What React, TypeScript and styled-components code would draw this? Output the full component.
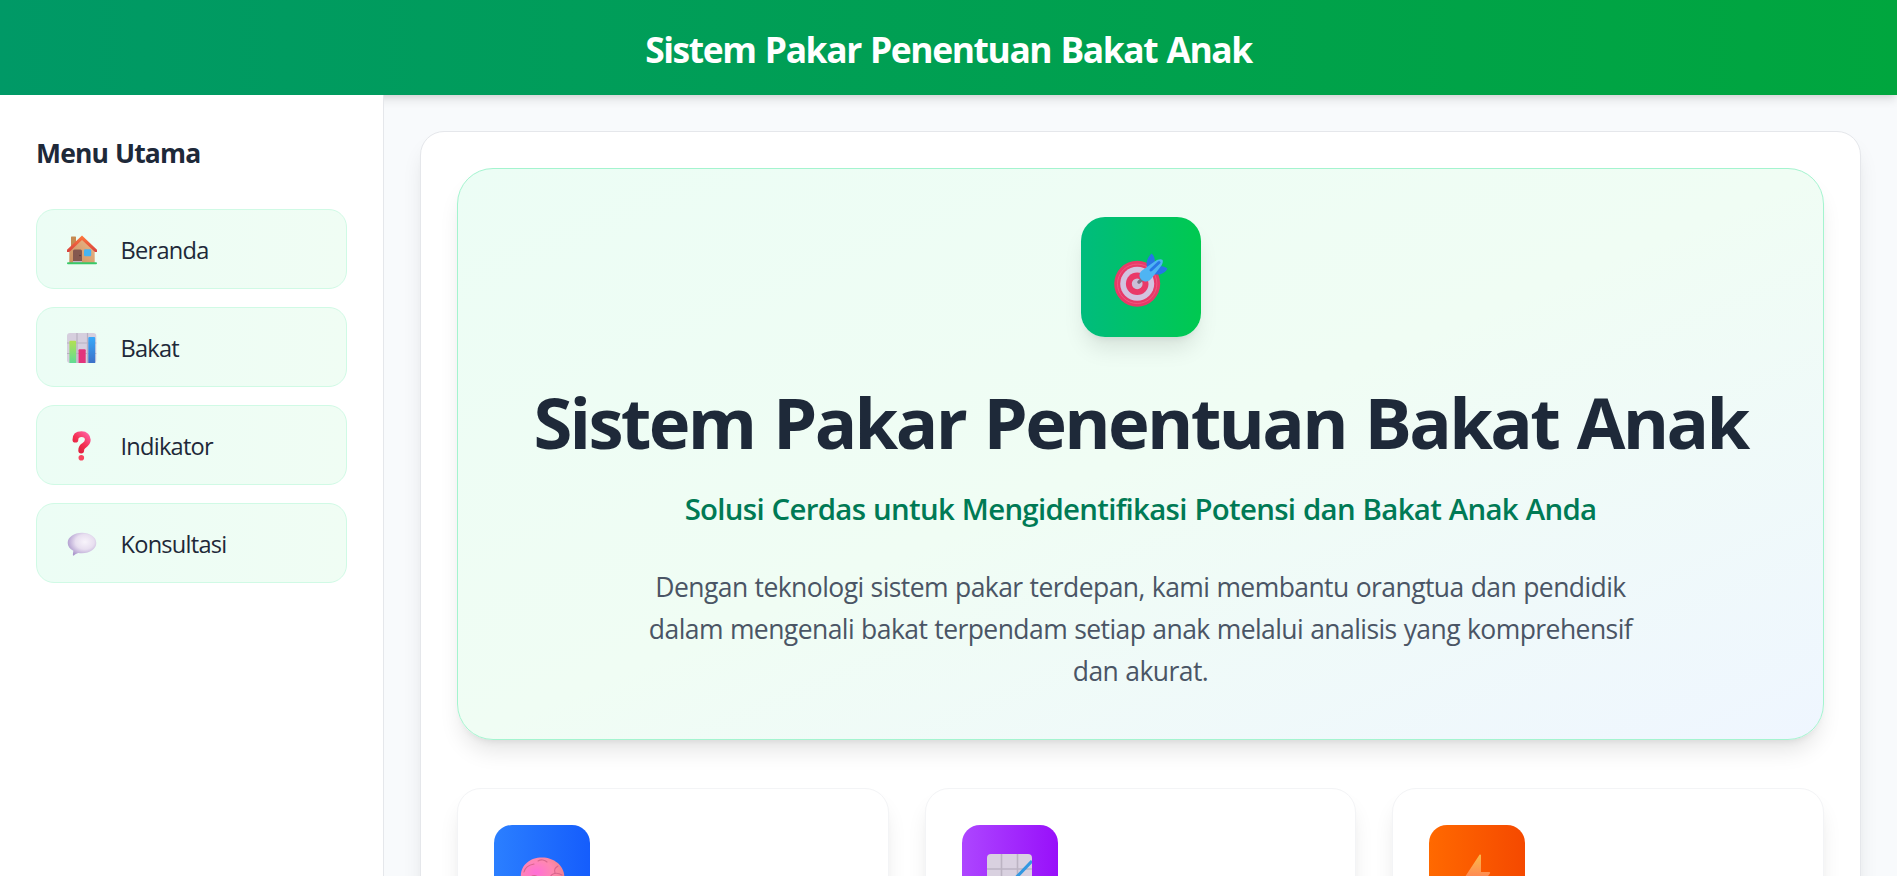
import React from 'react';
import styled, { createGlobalStyle } from 'styled-components';

const GlobalStyle = createGlobalStyle`
  *, *::before, *::after { box-sizing: border-box; }
  html, body { margin: 0; padding: 0; background: #fff; overflow: hidden; }
  body { font-family: 'Open Sans', 'Noto Sans', sans-serif; color: #1e2939; }
  h1, h2, p { margin: 0; }
`;

const Page = styled.div`
  width: 1897px;
  height: 876px;
  display: flex;
  flex-direction: column;
  overflow: hidden;
  background: #f8fafc;
`;

const Header = styled.header`
  flex: none;
  height: 95px;
  display: flex;
  align-items: center;
  justify-content: center;
  padding-top: 2px;
  background: linear-gradient(to right, #009966, #00a63e);
  box-shadow: 0 6px 9px -1px rgba(0, 0, 0, 0.1), 0 3px 6px -3px rgba(0, 0, 0, 0.1);
`;

const HeaderTitle = styled.h1`
  font-size: 35.4px;
  line-height: 48px;
  font-weight: 700;
  letter-spacing: -1.4px;
  word-spacing: 1.4px;
  color: #fff;
  white-space: nowrap;
`;

const Body = styled.div`
  flex: 1;
  min-height: 0;
  display: flex;
`;

const Sidebar = styled.aside`
  flex: none;
  position: relative;
  width: 384px;
  padding: 37px 36px 36px;
  background: #fff;
  border-right: 1px solid #e5e7eb;
`;

const SidebarTitle = styled.h2`
  font-size: 26.5px;
  line-height: 42px;
  font-weight: 700;
  letter-spacing: -0.85px;
  word-spacing: 0.9px;
  color: #1e2939;
  margin-bottom: 35px;
`;

const Menu = styled.nav`
  display: flex;
  flex-direction: column;
  gap: 18px;
`;

const MenuItem = styled.a`
  height: 80px;
  display: flex;
  align-items: center;
  gap: 23.5px;
  padding: 2px 24px 0 30px;
  border: 1px solid #d0fae5;
  border-radius: 18px;
  background: linear-gradient(to right, #ecfdf5, #f0fdf4);
  font-size: 23.6px;
  line-height: 36px;
  letter-spacing: -0.75px;

  svg { flex: none; width: 30px; height: 30px; }
`;

const Main = styled.main`
  flex: 1;
  min-width: 0;
  padding: 36px;
`;

const Panel = styled.section`
  height: 1200px;
  padding: 36px;
  border: 1px solid #e5e7eb;
  border-radius: 24px;
  background: #fff;
  box-shadow: 0 15px 22px -4px rgba(0, 0, 0, 0.1), 0 6px 9px -6px rgba(0, 0, 0, 0.1);
`;

const Hero = styled.div`
  height: 572px;
  display: flex;
  flex-direction: column;
  align-items: center;
  padding: 48px;
  border: 1px solid #a4f4cf;
  border-radius: 36px;
  background: linear-gradient(to bottom right, #ecfdf5, #f0fdf4 50%, #eff6ff);
  box-shadow: 0 15px 22px -4px rgba(0, 0, 0, 0.1), 0 6px 9px -6px rgba(0, 0, 0, 0.1);
  text-align: center;
`;

const HeroIcon = styled.div`
  flex: none;
  width: 120px;
  height: 120px;
  display: grid;
  place-items: center;
  border-radius: 24px;
  background: linear-gradient(to right, #00bc7d, #00c950);
  box-shadow: 0 15px 22px -4px rgba(0, 0, 0, 0.1), 0 6px 9px -6px rgba(0, 0, 0, 0.1);

  svg { width: 54px; height: 54px; margin-top: 6px; }
`;

const HeroTitle = styled.h1`
  margin-top: 40px;
  font-size: 70.6px;
  line-height: 90px;
  font-weight: 700;
  letter-spacing: -2.7px;
  word-spacing: 3px;
  white-space: nowrap;
`;

const HeroSubtitle = styled.p`
  margin-top: 21px;
  font-size: 29.4px;
  line-height: 42px;
  font-weight: 600;
  letter-spacing: -0.7px;
  word-spacing: 0.8px;
  color: #007a55;
  white-space: nowrap;
`;

const HeroText = styled.p`
  margin-top: 36px;
  font-size: 26.5px;
  line-height: 42px;
  letter-spacing: -0.57px;
  word-spacing: 0.7px;
  color: #4a5565;
  white-space: nowrap;
`;

const CardGrid = styled.div`
  display: grid;
  grid-template-columns: repeat(3, 1fr);
  gap: 36px;
  margin-top: 48px;
`;

const Card = styled.article`
  height: 360px;
  padding: 36px;
  border: 1px solid #f3f4f6;
  border-radius: 24px;
  background: #fff;
  box-shadow: 0 15px 22px -4px rgba(0, 0, 0, 0.1), 0 6px 9px -6px rgba(0, 0, 0, 0.1);
`;

const CardIcon = styled.div<{ $from: string; $to: string }>`
  width: 96px;
  height: 96px;
  display: grid;
  place-items: center;
  border-radius: 18px;
  background: linear-gradient(to right, ${(p) => p.$from}, ${(p) => p.$to});

  svg { width: 45px; height: 45px; margin-top: 6px; }
`;

const HouseIcon = () => (
  <svg viewBox="0 0 30 30">
    <defs>
      <linearGradient id="wall" x1="0" x2="1" y1="1" y2="0">
        <stop offset="0" stopColor="#c98f5f" />
        <stop offset="1" stopColor="#edb98a" />
      </linearGradient>
      <linearGradient id="roof" x1="0" x2="0" y1="0" y2="1">
        <stop offset="0" stopColor="#ff7a3c" />
        <stop offset="1" stopColor="#d8413f" />
      </linearGradient>
    </defs>
    <rect x="4" y="1.5" width="5" height="10" rx="0.6" fill="#c68b52" />
    <path d="M2.3 15.5 15 3.5l12.7 12V28H2.3z" fill="url(#wall)" />
    <path d="M15 .6 30 14.7V17h-2L15 5 2.200 17H0v-2.300z" fill="url(#roof)" />
    <path d="M6 16a1.600 1.600 0 0 1 1.600-1.600h5.800A1.600 1.600 0 0 1 15 16v11.500H6z" fill="#85594f" />
    <circle cx="13" cy="20.500" r=".7" fill="#4c2f2f" />
    <rect x="6" y="26" width="9" height="1.800" fill="#c3b5c6" />
    <rect x="17" y="14.200" width="7.200" height="7" rx="1.300" fill="#44b4f3" />
    <rect x="0" y="27.300" width="30" height="2" rx="1" fill="#38c968" />
  </svg>
);

const BarsIcon = () => (
  <svg viewBox="0 0 30 30">
    <defs>
      <linearGradient id="barGreen" x1="0" x2="0" y1="0" y2="1">
        <stop offset="0" stopColor="#b3e052" />
        <stop offset="1" stopColor="#5fdc94" />
      </linearGradient>
      <linearGradient id="barBlue" x1="0" x2="0" y1="0" y2="1">
        <stop offset="0" stopColor="#37a9fa" />
        <stop offset="1" stopColor="#3d70c8" />
      </linearGradient>
    </defs>
    <rect x="0" y="0" width="29.300" height="30" rx="3" fill="#d6cfde" />
    <path d="M10 0v30M20.500 0v30M0 10h29.300M0 20.500h29.300" stroke="#b8b1c1" strokeWidth="1.200" />
    <path d="M2.400 8.700a1 1 0 0 1 1-1h4.700a1 1 0 0 1 1 1V30H2.400z" fill="url(#barGreen)" />
    <path d="M11.500 17.200a1 1 0 0 1 1-1h5.200a1 1 0 0 1 1 1V30h-7.200z" fill="#e2347c" />
    <path d="M21.300 5a1 1 0 0 1 1-1h4.900a1 1 0 0 1 1 1v25h-6.900z" fill="url(#barBlue)" />
  </svg>
);

const QuestionIcon = () => (
  <svg viewBox="0 0 30 30">
    <defs>
      <linearGradient id="mark" x1="1" x2="0.300" y1="0" y2="1">
        <stop offset="0" stopColor="#ff5c9c" />
        <stop offset="0.600" stopColor="#f32f50" />
        <stop offset="1" stopColor="#e0213f" />
      </linearGradient>
    </defs>
    <path
      d="M8.400 8.700C8.400 4.600 11.200 3.200 14.600 3.200c3.800 0 6.200 2.400 6.200 5.600 0 3.400-2.300 4.700-4.400 6.200-1.800 1.200-2.200 2.400-2.200 4.500"
      fill="none"
      stroke="url(#mark)"
      strokeWidth="5.800"
      strokeLinecap="round"
    />
    <circle cx="14.300" cy="26.800" r="2.800" fill="#f8455e" />
  </svg>
);

const BubbleIcon = () => (
  <svg viewBox="0 0 30 30">
    <defs>
      <radialGradient id="bubble" cx="0.600" cy="0.400" r="0.650">
        <stop offset="0" stopColor="#f8f4fb" />
        <stop offset="0.500" stopColor="#e8dff0" />
        <stop offset="1" stopColor="#ab97cc" />
      </radialGradient>
    </defs>
    <path
      d="M15 3.800c8 0 14.300 4.300 14.300 10.200S23 24.300 15 24.300c-1.300 0-2.600-.1-3.800-.3-1.600.8-3 1.200-4 2.300-.8.700-1.600.2-1.300-.8l.4-3.700C2.900 20 .7 17.200.7 14 .7 8.100 7 3.800 15 3.800z"
      fill="url(#bubble)"
    />
  </svg>
);

const TargetIcon = () => (
  <svg viewBox="0 0 54 54">
    <circle cx="23.200" cy="30.800" r="23" fill="#e83a68" />
    <circle cx="23.200" cy="30.800" r="19.700" fill="none" stroke="#f0577f" strokeWidth="1" />
    <circle cx="23.200" cy="30.800" r="17" fill="#d2c3e0" />
    <circle cx="23.200" cy="30.800" r="11.300" fill="#ea3868" />
    <circle cx="23.200" cy="30.800" r="5.400" fill="#cbbfd8" />
    <path d="m25 29 4.500-4" stroke="#7a7186" strokeWidth="3.500" strokeLinecap="round" />
    <path d="M33 14C31.500 8.500 34 4 37.500.6c2 1.600 3.500 4 3.300 8L36 16z" fill="#2775e5" />
    <path d="m39 21 6.500-8c3.500 0 6 1 8 2.700C51.500 19.500 46 23 39 21z" fill="#2775e5" />
    <path d="M28 17.500 41 8.200c2-1.800 6-2.700 7.300-1.500 1.200 1.200.2 4.800-1.600 6.800L37.500 25.500c-2.500 3.500-7 4-10 1.200s-2.500-6.700.5-9.200z" fill="#4fb4f3" />
    <path d="m37 17 8-7.500" stroke="#2878e6" strokeWidth="3" strokeLinecap="round" />
  </svg>
);

const BrainIcon = () => (
  <svg viewBox="0 0 45 45">
    <defs>
      <radialGradient id="brain" cx="0.350" cy="0.450" r="0.650">
        <stop offset="0" stopColor="#ff6fd8" />
        <stop offset="0.600" stopColor="#ff88b0" />
        <stop offset="1" stopColor="#f08290" />
      </radialGradient>
    </defs>
    <path d="M.8 22C.8 11 10 3.500 22 3.500S43.700 11.500 44.300 22c.4 8-6 15-14 15H12C5 37 .8 30 .8 22z" fill="url(#brain)" />
    <g fill="none" stroke="#d9658d" strokeWidth="1.100" strokeLinecap="round">
      <path d="M4 18c1-5 5-7 10-8" />
      <path d="M18 7c3-2 7-1 9 1" />
      <path d="M38 12c-3 2-4 3-3 7" />
      <path d="M30 24c1-5 7-6 12-3" />
      <path d="M12 22c3-1 5 0 7 2" />
    </g>
  </svg>
);

const ChartIcon = () => (
  <svg viewBox="0 0 45 45">
    <rect x="0" y="0" width="45" height="45" rx="4" fill="#d9d1e0" />
    <path d="M14.500 0v45M30.500 0v45M0 15h45M0 30h45" stroke="#bcb4c3" strokeWidth="1.600" />
    <path d="M0 44 14 36l8-5L45 7" fill="none" stroke="#3398e2" strokeWidth="3.200" />
  </svg>
);

const BoltIcon = () => (
  <svg viewBox="0 0 45 45">
    <defs>
      <linearGradient id="bolt" x1="0" x2="0" y1="0" y2="1">
        <stop offset="0" stopColor="#f9bb4b" />
        <stop offset="0.500" stopColor="#ff8a52" />
        <stop offset="1" stopColor="#ffb03b" />
      </linearGradient>
    </defs>
    <path d="M24.500.8c.3-.6 1.500-.4 1.500.4V18h8.200c.9 0 1.200.8.700 1.500L17 44c-.5.500-1.300.2-1.200-.6L18 26H9.500c-.7 0-1-.7-.7-1.300z" fill="url(#bolt)" />
  </svg>
);

const menu = [
  { label: 'Beranda', Icon: HouseIcon },
  { label: 'Bakat', Icon: BarsIcon },
  { label: 'Indikator', Icon: QuestionIcon },
  { label: 'Konsultasi', Icon: BubbleIcon },
];

const features = [
  { from: '#2b7fff', to: '#155dfc', Icon: BrainIcon },
  { from: '#ad46ff', to: '#9810fa', Icon: ChartIcon },
  { from: '#ff6900', to: '#f54900', Icon: BoltIcon },
];

export default function App() {
  return (
    <>
      <GlobalStyle />
      <Page>
        <Header>
          <HeaderTitle>Sistem Pakar Penentuan Bakat Anak</HeaderTitle>
        </Header>
        <Body>
          <Sidebar>
            <SidebarTitle>Menu Utama</SidebarTitle>
            <Menu>
              {menu.map(({ label, Icon }) => (
                <MenuItem key={label}>
                  <Icon />
                  <span>{label}</span>
                </MenuItem>
              ))}
            </Menu>
          </Sidebar>
          <Main>
            <Panel>
              <Hero>
                <HeroIcon>
                  <TargetIcon />
                </HeroIcon>
                <HeroTitle>Sistem Pakar Penentuan Bakat Anak</HeroTitle>
                <HeroSubtitle>Solusi Cerdas untuk Mengidentifikasi Potensi dan Bakat Anak Anda</HeroSubtitle>
                <HeroText>
                  Dengan teknologi sistem pakar terdepan, kami membantu orangtua dan pendidik
                  <br />
                  dalam mengenali bakat terpendam setiap anak melalui analisis yang komprehensif
                  <br />
                  dan akurat.
                </HeroText>
              </Hero>
              <CardGrid>
                {features.map(({ from, to, Icon }) => (
                  <Card key={from}>
                    <CardIcon $from={from} $to={to}>
                      <Icon />
                    </CardIcon>
                  </Card>
                ))}
              </CardGrid>
            </Panel>
          </Main>
        </Body>
      </Page>
    </>
  );
}
